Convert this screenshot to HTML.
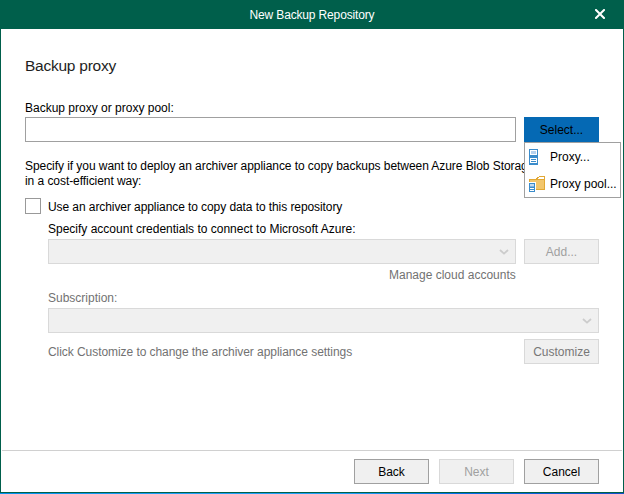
<!DOCTYPE html>
<html><head><meta charset="utf-8">
<style>
*{margin:0;padding:0;box-sizing:border-box}
html,body{width:624px;height:494px;overflow:hidden;background:#fff}
body{position:relative;font-family:"Liberation Sans",sans-serif;font-size:12px;color:#000}
.a{position:absolute;white-space:nowrap;line-height:15px;padding-top:1px}
.frame{position:absolute;left:0;top:0;width:624px;height:493px;border:1px solid #005f4b;border-top:none;background:#fff}
.title{position:absolute;left:0;top:0;width:624px;height:29px;background:#005f4b}
.btn{position:absolute;width:75px;height:25px;border:1px solid #a0a0a0;background:#f0f0f0;text-align:center;line-height:25px;color:#000}
.btn.dis{border-color:#d9d9d9;color:#a0a0a0}
.dd{position:absolute;border:1px solid #d9d9d9;background:#f0f0f0}
.g{color:#727272}
</style></head><body>
<div class="frame"></div>
<div class="title"></div>
<div class="a" style="left:0;width:624px;top:7px;text-align:center;color:#fff;letter-spacing:-0.15px">New Backup Repository</div>
<svg style="position:absolute;left:595px;top:9px" width="10" height="10" viewBox="0 0 10 10"><path d="M1 1L9 9M9 1L1 9" stroke="#fff" stroke-width="2" stroke-linecap="square"/></svg>

<div class="a" style="left:25px;top:56px;font-size:15.5px;line-height:18px;color:#1e1e1e;letter-spacing:-0.25px">Backup proxy</div>
<div class="a" style="left:25px;top:100px">Backup proxy or proxy pool:</div>
<div style="position:absolute;left:25px;top:117px;width:491px;height:25px;border:1px solid #a0a0a0;background:#fff"></div>
<div class="btn" style="left:524px;top:117px;background:#0569b4;border-color:#0569b4">Select...</div>

<div class="a" style="left:25px;top:158px;line-height:15px;letter-spacing:-0.06px">Specify if you want to deploy an archiver appliance to copy backups between Azure Blob Storage<br>in a cost-efficient way:</div>

<div style="position:absolute;left:25px;top:198px;width:16px;height:16px;border:1px solid #999;background:#fff"></div>
<div class="a" style="left:48px;top:199px;letter-spacing:-0.08px">Use an archiver appliance to copy data to this repository</div>
<div class="a" style="left:48px;top:221px">Specify account credentials to connect to Microsoft Azure:</div>
<div class="dd" style="left:48px;top:239px;width:468px;height:25px"></div>
<svg style="position:absolute;left:499px;top:249px" width="10" height="6" viewBox="0 0 10 6"><path d="M1 1L5 4.6L9 1" fill="none" stroke="#cccccc" stroke-width="1.8"/></svg>
<div class="btn dis" style="left:524px;top:239px">Add...</div>
<div class="a g" style="left:389px;top:267px">Manage cloud accounts</div>
<div class="a g" style="left:48px;top:290px">Subscription:</div>
<div class="dd" style="left:48px;top:308px;width:551px;height:25px"></div>
<svg style="position:absolute;left:582px;top:318px" width="10" height="6" viewBox="0 0 10 6"><path d="M1 1L5 4.6L9 1" fill="none" stroke="#cccccc" stroke-width="1.8"/></svg>
<div class="a g" style="left:48px;top:344px;letter-spacing:-0.06px">Click Customize to change the archiver appliance settings</div>
<div class="btn" style="left:524px;top:339px;border-color:#d9d9d9;color:#777">Customize</div>

<div style="position:absolute;left:2px;top:450px;width:620px;height:1px;background:#d0d0d0"></div>
<div class="btn" style="left:354px;top:459px">Back</div>
<div class="btn dis" style="left:439px;top:459px">Next</div>
<div class="btn" style="left:524px;top:459px">Cancel</div>
<div style="position:absolute;left:0;top:493px;width:624px;height:1px;background:linear-gradient(90deg,#0091eb 0%,#1ea0f5 30%,#1ea0f5 55%,#006ee6 74%,#1450c8 100%)"></div>

<!-- menu -->
<div style="position:absolute;left:524px;top:142px;width:97px;height:56px;border:1px solid #a0a0a0;background:#fff"></div>
<div class="a" style="left:550px;top:149px">Proxy...</div>
<div class="a" style="left:550px;top:176px">Proxy pool...</div>
<svg style="position:absolute;left:526px;top:146px" width="24" height="50" viewBox="0 0 24 50" shape-rendering="crispEdges">
<rect x="3" y="3" width="9" height="16" fill="#3b8ccb"/>
<rect x="4" y="4" width="7" height="5" fill="#fff"/>
<rect x="5" y="5" width="5" height="3" fill="#b6d2ee"/>
<rect x="4" y="12" width="7" height="5" fill="#fff"/>
<rect x="5" y="13" width="5" height="1" fill="#3b8ccb"/>
<rect x="5" y="15" width="5" height="1" fill="#3b8ccb"/>
<!-- folder -->
<path d="M10.5 33 L13.5 30.5 H18.5 V33" fill="#fff" stroke="#e2a834" stroke-width="1"/>
<rect x="3.5" y="33.5" width="15" height="10" fill="#f2c66c" stroke="#e2a834" stroke-width="1"/>
<rect x="2" y="36" width="8" height="12" fill="#fff"/>
<rect x="3" y="37" width="6" height="9" fill="#3b8ccb"/>
<rect x="4" y="38" width="4" height="2" fill="#c2daf0"/><rect x="4" y="40" width="4" height="1" fill="#7fb2de"/>
<rect x="4" y="42" width="4" height="1" fill="#fff"/>
<rect x="4" y="44" width="4" height="1" fill="#fff"/>
</svg>
</body></html>
